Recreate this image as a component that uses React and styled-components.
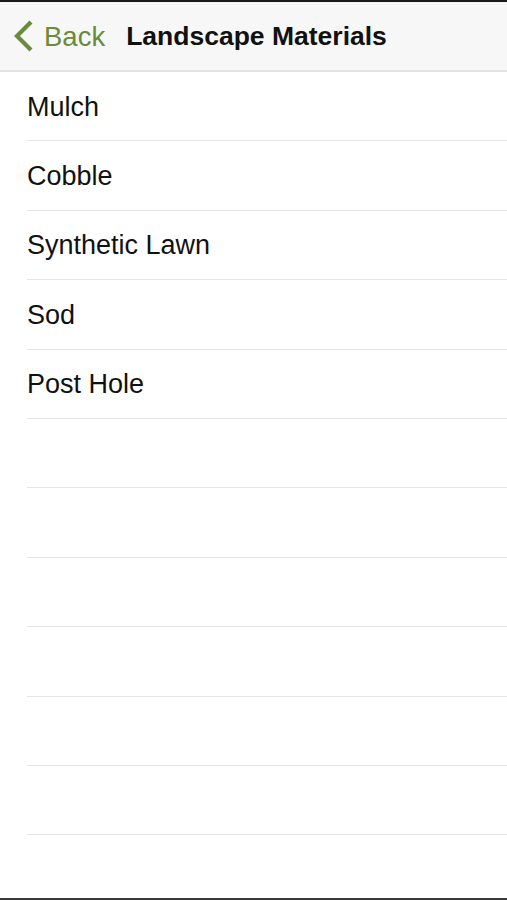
import styled, { createGlobalStyle } from 'styled-components';

const GlobalStyle = createGlobalStyle`
    html, body {
        margin: 0;
        padding: 0;
        background: #fff;
    }
    body {
        font-family: "Liberation Sans", Arial, sans-serif;
    }
`;

const items = ['Mulch', 'Cobble', 'Synthetic Lawn', 'Sod', 'Post Hole', '', '', '', '', '', ''];

export default function App() {
    return (
        <Screen>
            <GlobalStyle />
            <NavBar>
                <BackButton>
                    <svg width="22" height="32" viewBox="0 0 22 32">
                        <path d="M18 2 L4 16 L18 30" fill="none" stroke="#6a8a3c" strokeWidth="4.2" strokeLinecap="butt" strokeLinejoin="miter" />
                    </svg>
                    <BackLabel>Back</BackLabel>
                </BackButton>
                <Title>Landscape Materials</Title>
            </NavBar>
            <List>
                {items.map((name, i) => (
                    <Row key={i}>
                        <RowLabel>{name}</RowLabel>
                    </Row>
                ))}
            </List>
        </Screen>
    );
}

const Screen = styled.div`
    width: 507px;
    height: 900px;
    box-sizing: border-box;
    border-top: 2px solid #1a1a1a;
    border-bottom: 2px solid #3a3a3a;
    background: #fff;
    display: flex;
    flex-direction: column;
    overflow: hidden;
`;
const NavBar = styled.div`
    height: 68px;
    flex-shrink: 0;
    background: #f7f7f7;
    border-bottom: 2px solid #e2e2e2;
    display: flex;
    align-items: center;
    padding-left: 13px;
    gap: 21px;
`;
const BackButton = styled.div`
    display: flex;
    align-items: center;
    gap: 9px;
    color: #6a8a3c;
`;
const BackLabel = styled.span`
    font-size: 27.5px;
    position: relative;
    top: 1px;
`;
const Title = styled.h1`
    margin: 0;
    font-size: 26.5px;
    font-weight: 700;
    color: #111;
`;
const List = styled.div`
    display: flex;
    flex-direction: column;
`;
const Row = styled.div`
    height: 68.4px;
    margin-left: 27px;
    border-bottom: 1px solid #e4e4e4;
    display: flex;
    align-items: center;
`;
const RowLabel = styled.span`
    font-size: 27px;
    color: #111;
    position: relative;
    top: 1px;
`;
